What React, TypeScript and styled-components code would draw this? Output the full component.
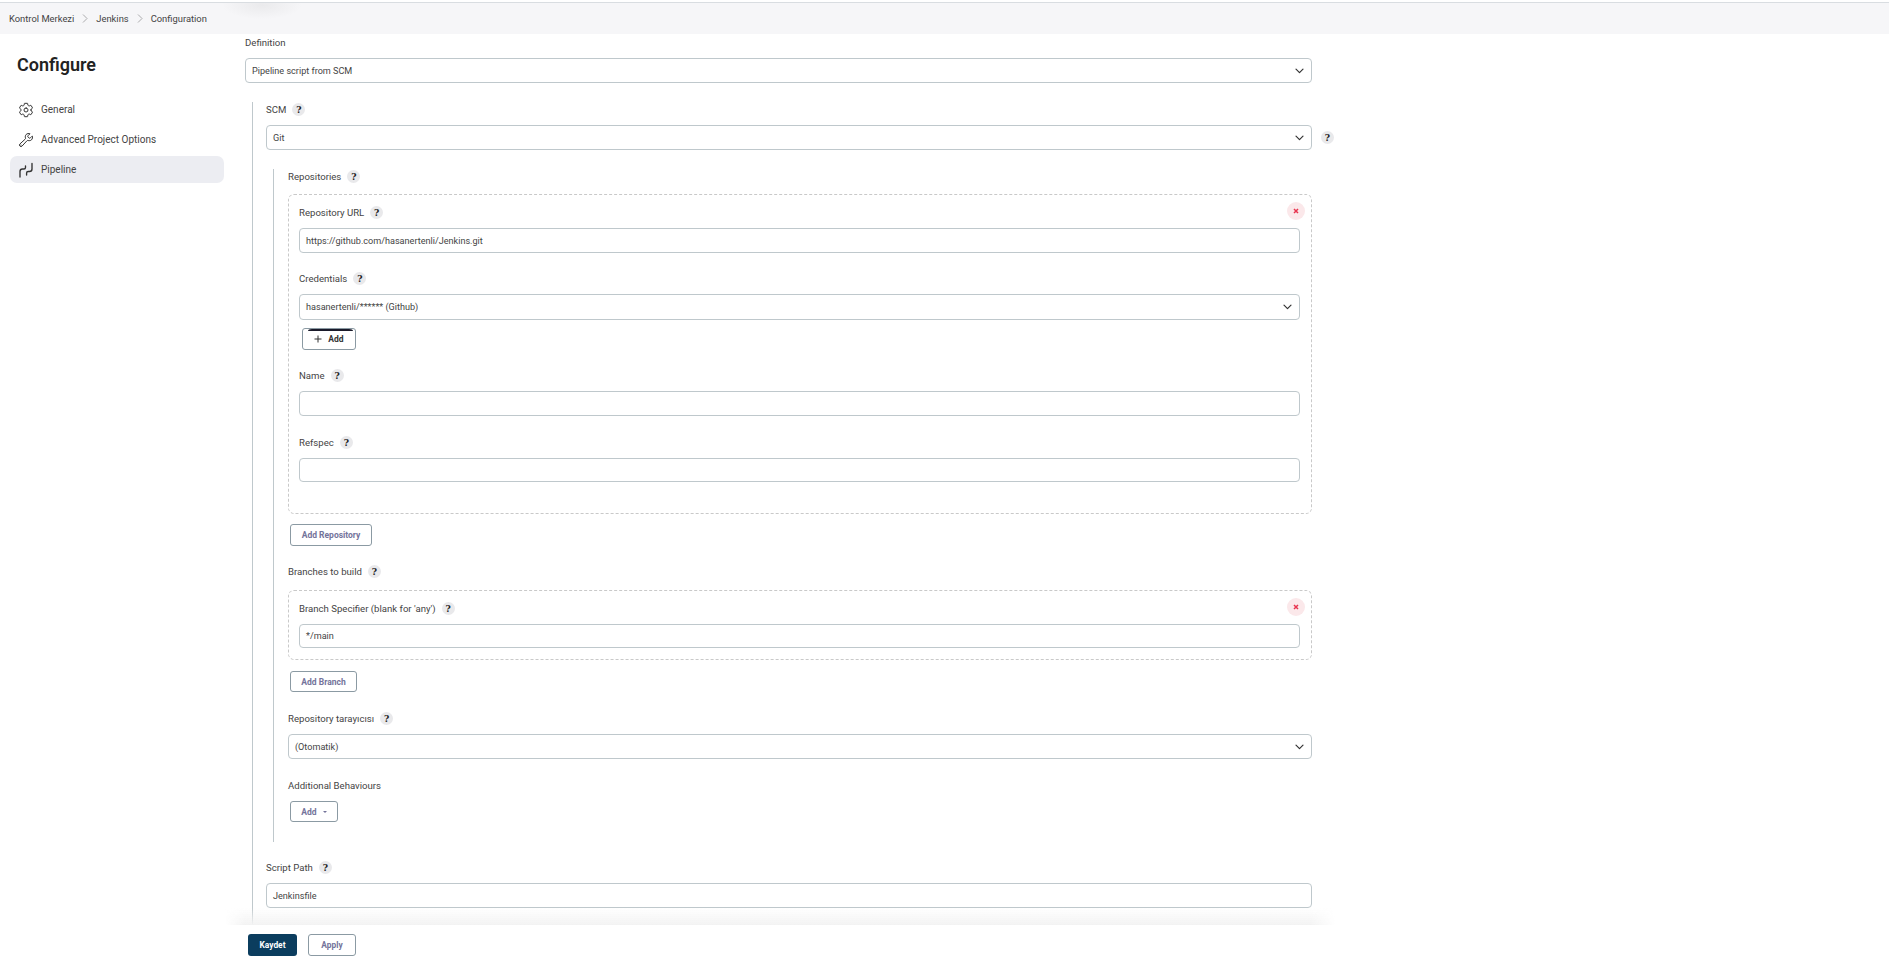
import React from "react";
import styled, { createGlobalStyle } from "styled-components";
import { IoSettingsOutline, IoBuildOutline } from "react-icons/io5";

const Global = createGlobalStyle`
  html, body { margin: 0; padding: 0; background: #fff; }
  body { font-family: Roboto, "Noto Sans", sans-serif; color: #333; font-size: 10px; }
  * { box-sizing: border-box; }
`;

const Page = styled.div`
  height: 962px;
  display: flex;
  flex-direction: column;
  overflow: hidden;
`;

const TopBar = styled.header`
  height: 32px;
  margin-top: 2px;
  flex: none;
  border-top: 1px solid #d9dde1;
  background: radial-gradient(ellipse 40px 14px at 262px 2px, #eaeaec, rgba(234, 234, 236, 0)), #f6f6f8;
  display: flex;
  align-items: center;
  padding: 0 0 0 9px;
  gap: 8px;
  font-size: 9.4px;
  color: #444;
`;

const Crumb = styled.span`
  white-space: nowrap;
`;

const Body = styled.div`
  flex: 1;
  min-height: 0;
  display: flex;
`;

const Sidebar = styled.aside`
  width: 245px;
  flex: none;
  padding: 0 21px 0 10px;
`;

const Title = styled.h1`
  margin: 19px 0 19px 7px;
  font-size: 18px;
  line-height: 24px;
  font-weight: 600;
  color: #222;
`;

const NavItem = styled.div<{ $active?: boolean }>`
  height: 27px;
  margin-bottom: 3px;
  padding-left: 8px;
  display: flex;
  align-items: center;
  gap: 7px;
  border-radius: 7px;
  font-size: 10px;
  color: #444;
  background: ${(p) => (p.$active ? "#ecedf2" : "transparent")};
  svg { flex: none; color: #333; }
`;

const Main = styled.div`
  width: 1090px;
  flex: none;
  display: flex;
  flex-direction: column;
  min-height: 0;
`;

const Scroller = styled.div`
  flex: 1;
  min-height: 0;
  overflow: hidden;
  padding: 1px 23px 0 0;
`;

const LabelRow = styled.div<{ $mt?: number }>`
  height: 16px;
  padding-bottom: 1px;
  margin-top: ${(p) => p.$mt ?? 0}px;
  margin-bottom: 7px;
  display: flex;
  align-items: center;
  gap: 6px;
  font-size: 9.6px;
  color: #444;
  white-space: nowrap;
`;

const Help = styled.span`
  width: 13px;
  height: 13px;
  flex: none;
  border-radius: 50%;
  background: #e9e9eb;
  color: #222;
  font-family: "DejaVu Serif", serif;
  font-size: 9px;
  font-weight: 700;
  display: flex;
  align-items: center;
  justify-content: center;
`;

const Control = styled.div<{ $h?: number }>`
  height: ${(p) => p.$h ?? 25}px;
  flex: 1;
  border: 1px solid #bfc8cc;
  border-radius: 4px;
  background: #fff;
  padding: 0 6px;
  display: flex;
  align-items: center;
  justify-content: space-between;
  font-size: 9.1px;
  color: #444;
  white-space: nowrap;
  svg { margin-right: 1px; color: #333; }
`;

const Stack = styled.div`
  display: flex;
`;

const SelectWithHelp = styled.div`
  display: flex;
  align-items: center;
  gap: 9px;
  margin-right: -22px;
`;

const Section = styled.div<{ $mt: number; $pb?: number; $pl?: number }>`
  margin-top: ${(p) => p.$mt}px;
  margin-left: 7px;
  padding-left: ${(p) => p.$pl ?? 13}px;
  padding-bottom: ${(p) => p.$pb ?? 0}px;
  border-left: 1px solid #bfc8cc;
`;

const Repeat = styled.div<{ $pb: number; $mt: number }>`
  position: relative;
  margin-top: ${(p) => p.$mt}px;
  padding: 10px 11px ${(p) => p.$pb}px 10px;
  border: 1px dashed #c9c9c9;
  border-radius: 6px;
`;

const Remove = styled.span`
  position: absolute;
  top: 7px;
  right: 6px;
  width: 18px;
  height: 18px;
  border-radius: 50%;
  background: #fbe8ea;
  color: #e8344f;
  display: flex;
  align-items: center;
  justify-content: center;
`;

const Button = styled.button<{ $w: number; $h?: number; $mt: number; $ml?: number }>`
  display: flex;
  align-items: center;
  justify-content: center;
  gap: 6px;
  width: ${(p) => p.$w}px;
  height: ${(p) => p.$h ?? 22}px;
  margin-top: ${(p) => p.$mt}px;
  margin-left: ${(p) => p.$ml ?? 2}px;
  padding: 0;
  border: 1px solid #8b9aa3;
  border-radius: 3px;
  background: #fff;
  color: #73739a;
  font-family: inherit;
  font-size: 8.5px;
  font-weight: 700;
`;

const FocusedButton = styled(Button)`
  position: relative;
  color: #333;
  &::before {
    content: "";
    position: absolute;
    top: 0;
    left: 5px;
    right: 2px;
    height: 4px;
    border-top: 2px solid #1a1a2a;
    border-radius: 4px 4px 0 0 / 2px 2px 0 0;
  }
`;

const Caret = styled.span`
  width: 0;
  height: 0;
  margin-top: 1px;
  border-left: 2px solid transparent;
  border-right: 2px solid transparent;
  border-top: 2px solid #73739a;
`;

const Footer = styled.footer`
  position: relative;
  flex: none;
  height: 37px;
  background: #fff;
  padding: 9px 0 0 3px;
  display: flex;
  align-items: flex-start;
  gap: 11px;
  &::before {
    content: "";
    position: absolute;
    left: -20px;
    right: 0;
    top: -17px;
    height: 17px;
    background: linear-gradient(to bottom, rgba(243, 243, 243, 0), #f3f3f3);
    -webkit-mask-image: linear-gradient(to right, transparent, #000 20px, #000 calc(100% - 24px), transparent);
    mask-image: linear-gradient(to right, transparent, #000 20px, #000 calc(100% - 24px), transparent);
  }
`;

const SaveButton = styled.button`
  width: 49px;
  height: 22px;
  border: none;
  border-radius: 3px;
  background: #0b3d5e;
  color: #fff;
  font-family: inherit;
  font-size: 8.4px;
  font-weight: 700;
  padding: 0;
`;

const ApplyButton = styled.button`
  width: 48px;
  height: 22px;
  border: 1px solid #8b9aa3;
  border-radius: 3px;
  background: #fff;
  color: #73739a;
  font-family: inherit;
  font-size: 8.4px;
  font-weight: 700;
  padding: 0;
`;

const Chevron = () => (
  <svg width="9" height="6" viewBox="0 0 9 6" fill="none" stroke="currentColor" strokeWidth="1.2" strokeLinecap="round" strokeLinejoin="round">
    <path d="M1 1.2 4.5 4.7 8 1.2" />
  </svg>
);

const PipelineIcon = () => (
  <svg width="16" height="16" viewBox="0 0 16 16" fill="none" stroke="currentColor" strokeWidth="1.35" strokeLinecap="round" strokeLinejoin="round">
    <path d="M2 15V9.5C2 8 3 7 4.5 7H6C7 7 7.5 6.5 7.5 5.5V4" />
    <path d="M14 1.5V7C14 8.7 13 9.5 11.5 9.5H10.2C9.2 9.5 8.6 10 8.6 11V13" />
  </svg>
);

const Cross = () => (
  <svg width="6" height="6" viewBox="0 0 6 6" fill="none" stroke="currentColor" strokeWidth="1.5">
    <path d="M1 1 5 5M5 1 1 5" />
  </svg>
);

const Plus = () => (
  <svg width="8" height="8" viewBox="0 0 8 8" fill="none" stroke="currentColor" strokeWidth="1">
    <path d="M4 .5V7.5M.5 4H7.5" />
  </svg>
);

const Label = ({ text, mt, help = true }: { text: string; mt?: number; help?: boolean }) => (
  <LabelRow $mt={mt}>
    {text}
    {help && <Help>?</Help>}
  </LabelRow>
);

export default function App() {
  return (
    <Page>
      <Global />
      <TopBar>
        <Crumb>Kontrol Merkezi</Crumb>
        <svg width="6" height="9" viewBox="0 0 6 9" fill="none" stroke="#9a9a9a" strokeWidth="0.8"><path d="M1 .5 5 4.5 1 8.5" /></svg>
        <Crumb>Jenkins</Crumb>
        <svg width="6" height="9" viewBox="0 0 6 9" fill="none" stroke="#9a9a9a" strokeWidth="0.8"><path d="M1 .5 5 4.5 1 8.5" /></svg>
        <Crumb>Configuration</Crumb>
      </TopBar>
      <Body>
        <Sidebar>
          <Title>Configure</Title>
          <NavItem><IoSettingsOutline size={16} />General</NavItem>
          <NavItem><IoBuildOutline size={16} />Advanced Project Options</NavItem>
          <NavItem $active><PipelineIcon />Pipeline</NavItem>
        </Sidebar>
        <Main>
          <Scroller>
            <Label text="Definition" help={false} />
            <Stack>
              <Control>Pipeline script from SCM<Chevron /></Control>
            </Stack>
            <Section $mt={19} $pb={40}>
              <Label text="SCM" />
              <SelectWithHelp>
                <Control>Git<Chevron /></Control>
                <Help>?</Help>
              </SelectWithHelp>
              <Section $mt={19} $pb={20} $pl={14}>
                <Label text="Repositories" />
                <Repeat $mt={9} $pb={31}>
                  <Remove><Cross /></Remove>
                  <Label text="Repository URL" />
                  <Stack><Control>https://github.com/hasanertenli/Jenkins.git</Control></Stack>
                  <Label text="Credentials" mt={18} />
                  <Stack><Control $h={26}>hasanertenli/****** (Github)<Chevron /></Control></Stack>
                  <FocusedButton $w={54} $mt={8} $ml={3}><Plus />Add</FocusedButton>
                  <Label text="Name" mt={18} />
                  <Stack><Control>{""}</Control></Stack>
                  <Label text="Refspec" mt={19} />
                  <Stack><Control $h={24}>{""}</Control></Stack>
                </Repeat>
                <Button $w={82} $mt={10}>Add Repository</Button>
                <Label text="Branches to build" mt={18} />
                <Repeat $mt={10} $pb={11}>
                  <Remove><Cross /></Remove>
                  <Label text="Branch Specifier (blank for 'any')" />
                  <Stack><Control $h={24}>*/main</Control></Stack>
                </Repeat>
                <Button $w={67} $h={21} $mt={11}>Add Branch</Button>
                <Label text="Repository tarayıcısı" mt={19} />
                <Stack><Control>(Otomatik)<Chevron /></Control></Stack>
                <Label text="Additional Behaviours" mt={19} help={false} />
                <Button $w={48} $h={21} $mt={0}>Add<Caret /></Button>
              </Section>
              <Label text="Script Path" mt={18} />
              <Stack><Control>Jenkinsfile</Control></Stack>
            </Section>
          </Scroller>
          <Footer>
            <SaveButton>Kaydet</SaveButton>
            <ApplyButton>Apply</ApplyButton>
          </Footer>
        </Main>
      </Body>
    </Page>
  );
}
